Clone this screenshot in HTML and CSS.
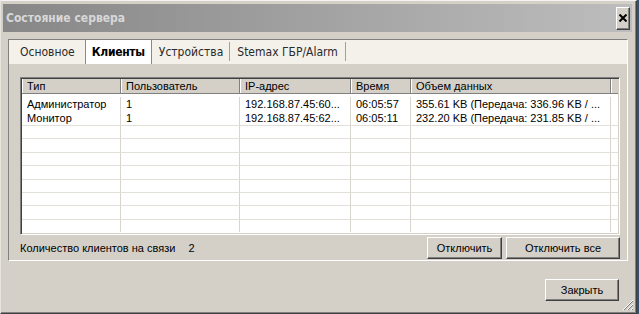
FILE: index.html
```html
<!DOCTYPE html>
<html lang="ru">
<head>
<meta charset="utf-8">
<title>Состояние сервера</title>
<link rel="stylesheet" href="styles.css">
</head>
<body>
<div class="window">
  <div class="titlebar">
    <span class="title">Состояние сервера</span>
    <button class="close" aria-label="Закрыть">
      <svg width="8" height="8" viewBox="0 0 8 8"><path d="M0.5 0.5 L7.5 7.5 M7.5 0.5 L0.5 7.5" stroke="#000" stroke-width="2"/></svg>
    </button>
  </div>
  <div class="tabs">
    <div class="tabstrip">
      <span class="tab first">Основное</span>
      <span class="tab active">Клиенты</span>
      <span class="tab mid">Устройства</span>
      <span class="tab last">Stemax ГБР/Alarm</span>
    </div>
    <div class="panel">
      <div class="list">
        <div class="lhead">
          <span class="hc">Тип</span>
          <span class="hc">Пользователь</span>
          <span class="hc">IP-адрес</span>
          <span class="hc">Время</span>
          <span class="hc">Объем данных</span>
          <span class="hc hfill"></span>
        </div>
        <div class="lbody">
          <div class="lrow data"><span>Администратор</span><span>1</span><span>192.168.87.45:60...</span><span>06:05:57</span><span>355.61 KB (Передача: 336.96 KB / ...</span><span></span></div>
          <div class="lrow data"><span>Монитор</span><span>1</span><span>192.168.87.45:62...</span><span>06:05:11</span><span>232.20 KB (Передача: 231.85 KB / ...</span><span></span></div>
          <div class="lrow"><span></span><span></span><span></span><span></span><span></span><span></span></div>
          <div class="lrow"><span></span><span></span><span></span><span></span><span></span><span></span></div>
          <div class="lrow"><span></span><span></span><span></span><span></span><span></span><span></span></div>
          <div class="lrow"><span></span><span></span><span></span><span></span><span></span><span></span></div>
          <div class="lrow"><span></span><span></span><span></span><span></span><span></span><span></span></div>
          <div class="lrow"><span></span><span></span><span></span><span></span><span></span><span></span></div>
          <div class="lrow"><span></span><span></span><span></span><span></span><span></span><span></span></div>
          <div class="lrow"><span></span><span></span><span></span><span></span><span></span><span></span></div>
        </div>
      </div>
      <div class="footer">
        <span class="count">Количество клиентов на связи</span>
        <span class="num">2</span>
        <button class="btn b1">Отключить</button>
        <button class="btn b2">Отключить все</button>
      </div>
    </div>
  </div>
  <div class="bottom">
    <button class="btn b3">Закрыть</button>
  </div>
  <svg class="grip" width="12" height="12" viewBox="0 0 12 12">
    <path d="M11 1 L1 11 M11 5 L5 11 M11 9 L9 11" stroke="#fff" stroke-width="1"/>
    <path d="M11 2 L2 11 M11 6 L6 11 M11 10 L10 11" stroke="#808080" stroke-width="1"/>
  </svg>
</div>
</body>
</html>
```

FILE: styles.css
```css
html, body {
  margin: 0;
  padding: 0;
}
body {
  background: #33506f;
  width: 639px;
  height: 314px;
  overflow: hidden;
}
.window {
  position: relative;
  box-sizing: border-box;
  width: 637px;
  height: 314px;
  background: #d4d0c8;
  border-top: 1px solid #f4f4f4;
  border-left: 1px solid #e6e4df;
  border-right: 1px solid #404040;
  border-bottom: 1px solid #404040;
  box-shadow: inset -1px -1px 0 #808080;
  padding: 3px 3px 0 2px;
  font-family: "Liberation Sans", Arial, sans-serif;
}
.titlebar {
  display: flex;
  align-items: center;
  height: 28px;
  width: 629px;
  background: linear-gradient(to right, #878787, #bdbdbd);
}
.title {
  padding-left: 3px;
  color: #d8d8d8;
  font-family: "DejaVu Sans Condensed", "DejaVu Sans", sans-serif;
  font-stretch: condensed;
  font-weight: bold;
  font-size: 12px;
}
.close {
  margin-left: auto;
  margin-right: 2px;
  width: 14px;
  height: 23px;
  padding: 0;
  background: #d4d0c8;
  border: 1px solid;
  border-color: #fff #404040 #404040 #fff;
  box-shadow: inset -1px -1px 0 #808080;
  display: flex;
  align-items: center;
  justify-content: center;
}
.tabs {
  margin: 7px 0 0 5px;
  width: 620px;
  box-sizing: border-box;
  border-top: 1px solid #808080;
  border-left: 1px solid #808080;
  border-right: 1px solid #fff;
  border-bottom: 1px solid #fff;
}
.tabstrip {
  display: flex;
  align-items: stretch;
  height: 24px;
  background: #f4f1ea;
  padding-left: 5px;
  font-family: "DejaVu Sans Condensed", "DejaVu Sans", sans-serif;
  font-stretch: condensed;
  font-size: 12px;
  color: #2a2a2a;
}
.tab {
  display: flex;
  align-items: center;
  padding: 0 7px;
  position: relative;
}
.tab.first {
  padding: 0 9px 0 6px;
}
.tab.mid {
  padding: 0 6px 0 7px;
}
.tab::after {
  content: "";
  position: absolute;
  right: -1px;
  top: 2px;
  bottom: 3px;
  width: 1px;
  background: #a0a0a0;
}
.tab.active {
  background: #fff;
  font-weight: bold;
  letter-spacing: -0.3px;
  color: #000;
  border-left: 1px solid #8a8a8a;
  border-right: 1px solid #8a8a8a;
  padding: 0 6px;
  z-index: 1;
}
.tab.active::after,
.tab.first::after {
  display: none;
}
.tab + .tab { margin-left: 1px; }
.tab.active + .tab { margin-left: 0; }
.panel {
  padding: 13px 7px 1px 11px;
}
.list {
  box-sizing: border-box;
  height: 158px;
  background: #fff;
  border-top: 1px solid #808080;
  border-left: 1px solid #808080;
  border-right: 1px solid #fff;
  border-bottom: 1px solid #fff;
  box-shadow: inset 1px 1px 0 #404040, inset -1px -1px 0 #d4d0c8;
  padding: 1px;
  overflow: hidden;
  font-size: 11px;
  color: #000;
}
.lhead, .lrow {
  display: grid;
  grid-template-columns: 99px 119px 111px 60px 200px 1fr;
}
.lhead {
  height: 15px;
  background: #d4d0c8;
  border-bottom: 1px solid #808080;
  box-sizing: border-box;
}
.hc {
  box-sizing: border-box;
  padding-left: 5px;
  line-height: 14px;
  border-right: 1px solid #808080;
  box-shadow: inset 1px 0 0 #fff;
  white-space: nowrap;
}
.hc.hfill {
  border-right: 0;
}
.lrow {
  height: 13.4px;
  box-sizing: border-box;
  border-top: 1px solid #e2dfd9;
}
.lrow.data {
  border-top: 0;
  height: 14px;
}
.lrow span {
  border-right: 1px solid #d8d5cf;
  padding-left: 5px;
  line-height: 14px;
  white-space: nowrap;
  overflow: hidden;
}
.lrow span:last-child {
  border-right: 0;
}
.lbody {
  padding-top: 3px;
}
.footer {
  display: flex;
  align-items: center;
  height: 23px;
  padding-top: 1px;
  font-size: 11px;
  color: #000;
}
.num {
  margin-left: 13px;
}
.btn {
  box-sizing: border-box;
  height: 22px;
  padding: 0;
  background: #d4d0c8;
  border: 1px solid;
  border-color: #fff #404040 #404040 #fff;
  box-shadow: inset -1px -1px 0 #808080;
  font-family: "Liberation Sans", Arial, sans-serif;
  font-size: 11px;
  color: #000;
}
.b1 {
  width: 75px;
  margin-left: auto;
}
.b2 {
  width: 114px;
  margin-left: 4px;
}
.bottom {
  display: flex;
  justify-content: flex-end;
  padding: 18px 14px 0 0;
}
.b3 {
  width: 74px;
}
.grip {
  position: absolute;
  right: 2px;
  bottom: 2px;
}
```
